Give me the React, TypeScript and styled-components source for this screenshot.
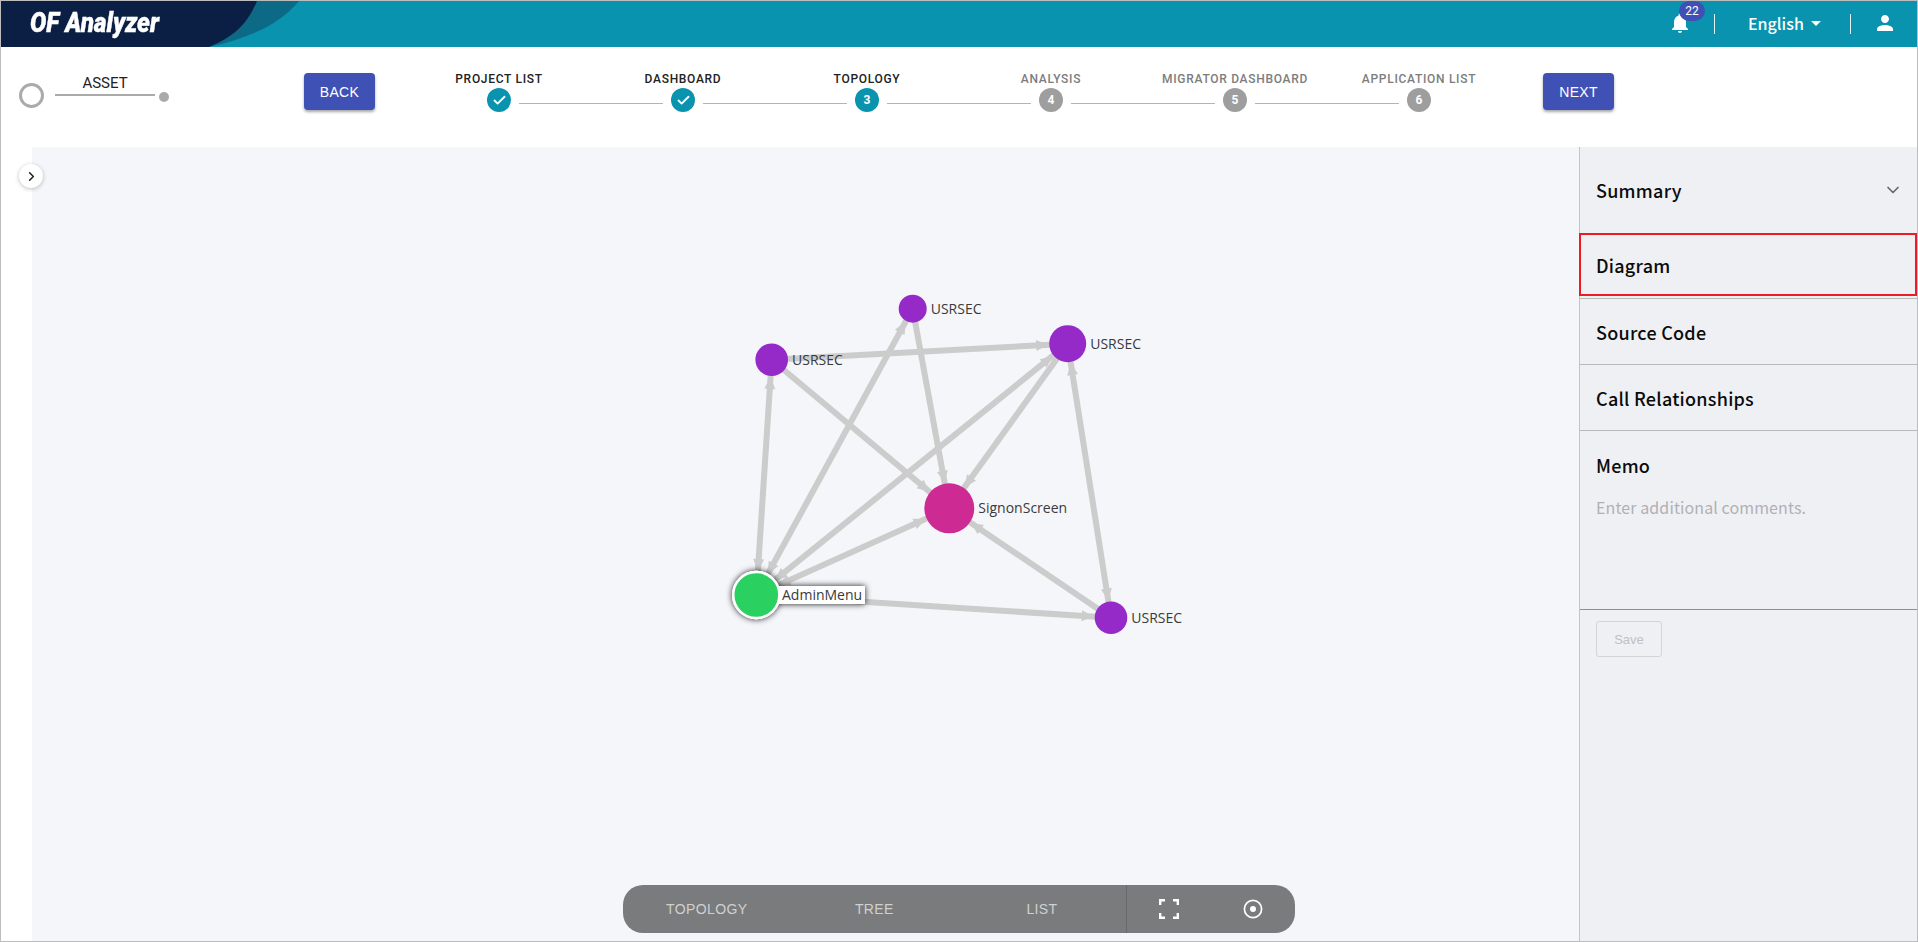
import React from "react";
import styled, { createGlobalStyle } from "styled-components";
import { Check, ChevronDown, ChevronRight } from "lucide-react";
import { MdArrowDropDown, MdNotifications, MdPerson } from "react-icons/md";

const GlobalStyle = createGlobalStyle`
    html, body { margin: 0; padding: 0; background: #fff; }
    * { box-sizing: border-box; }
    body { font-family: Roboto, "Liberation Sans", sans-serif; }
`;

const Page = styled("div")`
    position: relative;
    display: flex;
    flex-direction: column;
    width: 1918px;
    height: 942px;
    border: 1px solid #bdbdbd;
    overflow: hidden;
`;

const Header = styled("header")`
    position: relative;
    display: flex;
    align-items: center;
    justify-content: flex-end;
    flex: 0 0 46px;
    background: #0a93ae;
    color: #fff;
`;
const LogoShape = styled("svg")`
    position: absolute;
    left: 0;
    top: 0;
`;
const LogoText = styled("div")`
    position: absolute;
    left: 29px;
    top: 3px;
    font: italic 900 27px/38px Roboto, sans-serif;
    -webkit-text-stroke: 0.4px #fff;
    transform: scaleX(0.9);
    transform-origin: left center;
    white-space: nowrap;
`;
const BellBox = styled("div")`
    position: relative;
    display: flex;
    margin: -2px 22px 0 0;
`;
const Badge = styled("span")`
    position: absolute;
    left: 11px;
    top: -10px;
    width: 26px;
    height: 20px;
    border-radius: 10px;
    background: #3f51b5;
    font: 12px/20px Roboto, sans-serif;
    text-align: center;
`;
const HeaderDivider = styled("span")`
    width: 1px;
    height: 20px;
    background: #e3f2f5;
`;
const Language = styled("div")`
    display: flex;
    align-items: center;
    width: 135px;
    margin-top: -2px;
    padding-left: 33px;
    font: 500 16px/24px "Noto Sans CJK KR", "Noto Sans", sans-serif;
`;
const UserBox = styled("div")`
    display: flex;
    justify-content: center;
    width: 66px;
    margin-top: -2px;
    padding-left: 2px;
`;

const StepBar = styled("div")`
    display: flex;
    flex: 0 0 100px;
    background: #fff;
`;
const AssetBox = styled("div")`
    display: flex;
    flex: 0 0 303px;
    align-items: flex-start;
    padding: 36px 0 0 18px;
`;
const AssetRing = styled("span")`
    width: 25px;
    height: 25px;
    border: 3px solid #aaa;
    border-radius: 50%;
`;
const AssetTrack = styled("div")`
    display: flex;
    flex-direction: column;
    width: 100px;
    margin: -10px 0 0 11px;
    text-align: center;
    font: 400 15px/20px Roboto, sans-serif;
    color: #222;
`;
const AssetLine = styled("span")`
    display: block;
    height: 2px;
    margin-top: 1px;
    background: #aaa;
`;
const AssetDot = styled("span")`
    width: 10px;
    height: 10px;
    margin: 9px 0 0 4px;
    border-radius: 50%;
    background: #aaa;
`;
const NavButton = styled("button")`
    flex: 0 0 71px;
    height: 37px;
    margin-top: 26px;
    border: 0;
    border-radius: 4px;
    background: #3f51b5;
    color: #fff;
    font: 14px "Liberation Sans", sans-serif;
    letter-spacing: 0.3px;
    box-shadow: 0 2px 3px rgba(0, 0, 0, 0.35);
`;
const Steps = styled("ol")`
    display: grid;
    grid-template-columns: repeat(6, 184px);
    flex: 0 0 1104px;
    margin: 0 32px;
    padding: 0;
    list-style: none;
`;
const Step = styled("li")<{ $active: boolean; $first: boolean }>`
    position: relative;
    display: flex;
    flex-direction: column;
    align-items: center;
    padding-top: 25px;
    color: ${(p) => (p.$active ? "#222" : "#7d7d7d")};
    &::before {
        content: "";
        display: ${(p) => (p.$first ? "none" : "block")};
        position: absolute;
        left: -72px;
        width: 144px;
        top: 56px;
        height: 1px;
        background: #b4b4b4;
    }
`;
const StepLabel = styled("span")`
    font: 500 12px/14px Roboto, sans-serif;
    letter-spacing: 0.7px;
    white-space: nowrap;
`;
const StepCircle = styled("span")<{ $active: boolean }>`
    display: flex;
    align-items: center;
    justify-content: center;
    width: 24px;
    height: 24px;
    margin-top: 2px;
    border-radius: 50%;
    background: ${(p) => (p.$active ? "#0a93ae" : "#9e9e9e")};
    color: #fff;
    font: 700 12px Roboto, sans-serif;
`;

const Body = styled("div")`
    display: flex;
    flex: 1;
    min-height: 0;
`;
const LeftStrip = styled("div")`
    flex: 0 0 31px;
    background: #fff;
`;
const ToggleButton = styled("button")`
    position: absolute;
    left: 18px;
    top: 163px;
    display: flex;
    align-items: center;
    justify-content: center;
    width: 24px;
    height: 24px;
    padding: 0;
    border: 0;
    border-radius: 50%;
    background: #fff;
    color: #222;
    box-shadow: 0 1px 4px rgba(0, 0, 0, 0.25);
`;
const Canvas = styled("main")`
    flex: 1;
    background: #f5f6fa;
`;
const GraphSvg = styled("svg")`
    display: block;
`;
const GraphLabel = styled("text")`
    font: 14px "Open Sans", "Noto Sans", sans-serif;
    fill: #3a3a3a;
`;

const SidePanel = styled("aside")`
    display: flex;
    flex-direction: column;
    flex: 0 0 338px;
    background: #eff0f4;
    border-left: 1px solid #c4c4c8;
`;
const PanelTitle = styled("h3")`
    margin: 0;
    font: 500 18px/26px "Noto Sans CJK KR", "Noto Sans", sans-serif;
    letter-spacing: 0.25px;
    color: #0b0b0b;
`;
const SummaryRow = styled("div")`
    display: flex;
    align-items: center;
    justify-content: space-between;
    height: 86px;
    padding: 0 14px 0 16px;
    color: #666;
`;
const DiagramRow = styled("div")`
    height: 66px;
    padding-bottom: 2px;
    border-bottom: 1px solid #b9b9bd;
`;
const DiagramFrame = styled("div")`
    display: flex;
    align-items: center;
    height: 63px;
    padding-left: 15px;
    margin-left: -1px;
    border: 2px solid #ed1c24;
`;
const PanelRow = styled("div")`
    display: flex;
    align-items: center;
    height: 66px;
    padding-left: 16px;
    border-bottom: 1px solid #b9b9bd;
`;
const MemoBox = styled("div")`
    height: 179px;
    padding: 21px 16px 0;
    border-bottom: 1px solid #8f8f93;
`;
const MemoHint = styled("p")`
    margin: 17px 0 0;
    font: 400 16px/24px "Noto Sans CJK KR", "Noto Sans", sans-serif;
    letter-spacing: 0.1px;
    color: #b0b0b4;
`;
const SaveButton = styled("button")`
    align-self: flex-start;
    width: 66px;
    height: 36px;
    margin: 11px 0 0 16px;
    border: 1px solid #d3d4d8;
    border-radius: 3px;
    background: transparent;
    color: #c0c0c4;
    font: 13px "Liberation Sans", sans-serif;
`;

const ViewBar = styled("div")`
    position: absolute;
    left: 622px;
    bottom: 8px;
    display: flex;
    width: 672px;
    height: 48px;
    border-radius: 20px;
    background: #7a7b7d;
`;
const ViewTab = styled("div")`
    display: flex;
    align-items: center;
    justify-content: center;
    flex: 0 0 167.6px;
    color: #d0d0d0;
    font: 14px "Liberation Sans", sans-serif;
    letter-spacing: 0.4px;
`;
const ViewIcons = styled("div")`
    display: flex;
    flex: 1;
    border-left: 1px solid #68696b;
`;
const ViewIcon = styled("div")`
    display: flex;
    align-items: center;
    justify-content: center;
    flex: 1;
    color: #fff;
`;

type GraphNode = { x: number; y: number; r: number; fill: string; label: string };

const purple = "#962ac8";
const nodes: Record<string, GraphNode> = {
    top: { x: 912.7, y: 308.7, r: 14, fill: purple, label: "USRSEC" },
    left: { x: 771.7, y: 359.7, r: 16.3, fill: purple, label: "USRSEC" },
    right: { x: 1067.7, y: 343.7, r: 18.5, fill: purple, label: "USRSEC" },
    signon: { x: 949.3, y: 508.3, r: 25, fill: "#cd2a94", label: "SignonScreen" },
    bottom: { x: 1111, y: 617.7, r: 16.3, fill: purple, label: "USRSEC" },
    admin: { x: 756.3, y: 595, r: 22, fill: "#2ad060", label: "AdminMenu" },
};

// from, to, and whether the "from" end has a head too
const edges: [string, string, boolean][] = [
    ["top", "signon", false],
    ["admin", "top", true],
    ["left", "right", false],
    ["left", "signon", false],
    ["admin", "left", true],
    ["admin", "right", true],
    ["right", "signon", false],
    ["bottom", "right", true],
    ["admin", "signon", true],
    ["bottom", "signon", false],
    ["admin", "bottom", false],
];

const arrowHead = (from: GraphNode, to: GraphNode) => {
    const dx = to.x - from.x;
    const dy = to.y - from.y;
    const len = Math.hypot(dx, dy);
    const ux = dx / len;
    const uy = dy / len;
    const gap = to.r + (to.fill === "#2ad060" ? 2 : 1);
    const tipX = to.x - ux * gap;
    const tipY = to.y - uy * gap;
    const baseX = tipX - ux * 12;
    const baseY = tipY - uy * 12;
    return `${tipX},${tipY} ${baseX - uy * 5.5},${baseY + ux * 5.5} ${baseX + uy * 5.5},${baseY - ux * 5.5}`;
};

const Graph = () => (
    <GraphSvg width={1547} height={794} viewBox="32 147 1547 794">
        <defs>
            <filter id="glow" x="-40%" y="-40%" width="180%" height="180%">
                <feDropShadow dx="0" dy="0" stdDeviation="3" floodColor="#000" floodOpacity="0.9" />
            </filter>
        </defs>
        {edges.map(([a, b, both]) => (
            <g key={a + b} fill="#cccccc">
                <line x1={nodes[a].x} y1={nodes[a].y} x2={nodes[b].x} y2={nodes[b].y} stroke="#cccccc" strokeWidth={6} />
                <polygon points={arrowHead(nodes[a], nodes[b])} />
                {both && <polygon points={arrowHead(nodes[b], nodes[a])} />}
            </g>
        ))}
        {Object.entries(nodes).map(([key, n]) =>
            key === "admin" ? (
                <g key={key}>
                    <g filter="url(#glow)">
                        <rect x={779} y={586} width={86} height={18} fill="#fff" />
                        <circle cx={n.x} cy={n.y} r={n.r + 1} fill={n.fill} stroke="#fff" strokeWidth={2.4} />
                    </g>
                    <rect x={776} y={586} width={89} height={18} fill="#fff" />
                    <circle cx={n.x} cy={n.y} r={n.r + 1} fill={n.fill} stroke="#fff" strokeWidth={2.4} />
                    <GraphLabel x={782} y={600}>{n.label}</GraphLabel>
                </g>
            ) : (
                <g key={key}>
                    <circle cx={n.x} cy={n.y} r={n.r} fill={n.fill} />
                    <GraphLabel x={n.x + n.r + 4} y={n.y + 5}>{n.label}</GraphLabel>
                </g>
            )
        )}
    </GraphSvg>
);

const stepList = ["PROJECT LIST", "DASHBOARD", "TOPOLOGY", "ANALYSIS", "MIGRATOR DASHBOARD", "APPLICATION LIST"];

export default function App() {
    return (
        <Page>
            <GlobalStyle />
            <Header>
                <LogoShape width={300} height={46} viewBox="0 0 300 46">
                    <path d="M255 0 H298 C278 24 248 37 208 46 Z" fill="#0d6a87" />
                    <path d="M0 0 H256 C246 24 232 36 208 46 H0 Z" fill="#0b1f45" />
                </LogoShape>
                <LogoText>OF Analyzer</LogoText>
                <BellBox>
                    <MdNotifications size={24} />
                    <Badge>22</Badge>
                </BellBox>
                <HeaderDivider />
                <Language>
                    English
                    <MdArrowDropDown size={24} />
                </Language>
                <HeaderDivider />
                <UserBox>
                    <MdPerson size={24} />
                </UserBox>
            </Header>
            <StepBar>
                <AssetBox>
                    <AssetRing />
                    <AssetTrack>
                        ASSET
                        <AssetLine />
                    </AssetTrack>
                    <AssetDot />
                </AssetBox>
                <NavButton>BACK</NavButton>
                <Steps>
                    {stepList.map((label, i) => (
                        <Step key={label} $active={i < 3} $first={i === 0}>
                            <StepLabel>{label}</StepLabel>
                            <StepCircle $active={i < 3}>
                                {i < 2 ? <Check size={15} strokeWidth={3} /> : i + 1}
                            </StepCircle>
                        </Step>
                    ))}
                </Steps>
                <NavButton>NEXT</NavButton>
            </StepBar>
            <Body>
                <LeftStrip />
                <Canvas>
                    <Graph />
                </Canvas>
                <SidePanel>
                    <SummaryRow>
                        <PanelTitle>Summary</PanelTitle>
                        <ChevronDown size={20} />
                    </SummaryRow>
                    <DiagramRow>
                        <DiagramFrame>
                            <PanelTitle>Diagram</PanelTitle>
                        </DiagramFrame>
                    </DiagramRow>
                    <PanelRow>
                        <PanelTitle>Source Code</PanelTitle>
                    </PanelRow>
                    <PanelRow>
                        <PanelTitle>Call Relationships</PanelTitle>
                    </PanelRow>
                    <MemoBox>
                        <PanelTitle>Memo</PanelTitle>
                        <MemoHint>Enter additional comments.</MemoHint>
                    </MemoBox>
                    <SaveButton>Save</SaveButton>
                </SidePanel>
            </Body>
            <ToggleButton>
                <ChevronRight size={15} strokeWidth={2.5} />
            </ToggleButton>
            <ViewBar>
                <ViewTab>TOPOLOGY</ViewTab>
                <ViewTab>TREE</ViewTab>
                <ViewTab>LIST</ViewTab>
                <ViewIcons>
                    <ViewIcon>
                        <svg width="20" height="20" viewBox="0 0 20 20" fill="none" stroke="currentColor" strokeWidth="2.4">
                            <path d="M1.2 6 V1.2 H6 M14 1.2 H18.8 V6 M18.8 14 V18.8 H14 M6 18.8 H1.2 V14" />
                        </svg>
                    </ViewIcon>
                    <ViewIcon>
                        <svg width="20" height="20" viewBox="0 0 20 20">
                            <circle cx="10" cy="10" r="8.6" fill="none" stroke="currentColor" strokeWidth="1.7" />
                            <circle cx="10" cy="10" r="3" fill="currentColor" />
                        </svg>
                    </ViewIcon>
                </ViewIcons>
            </ViewBar>
        </Page>
    );
}
